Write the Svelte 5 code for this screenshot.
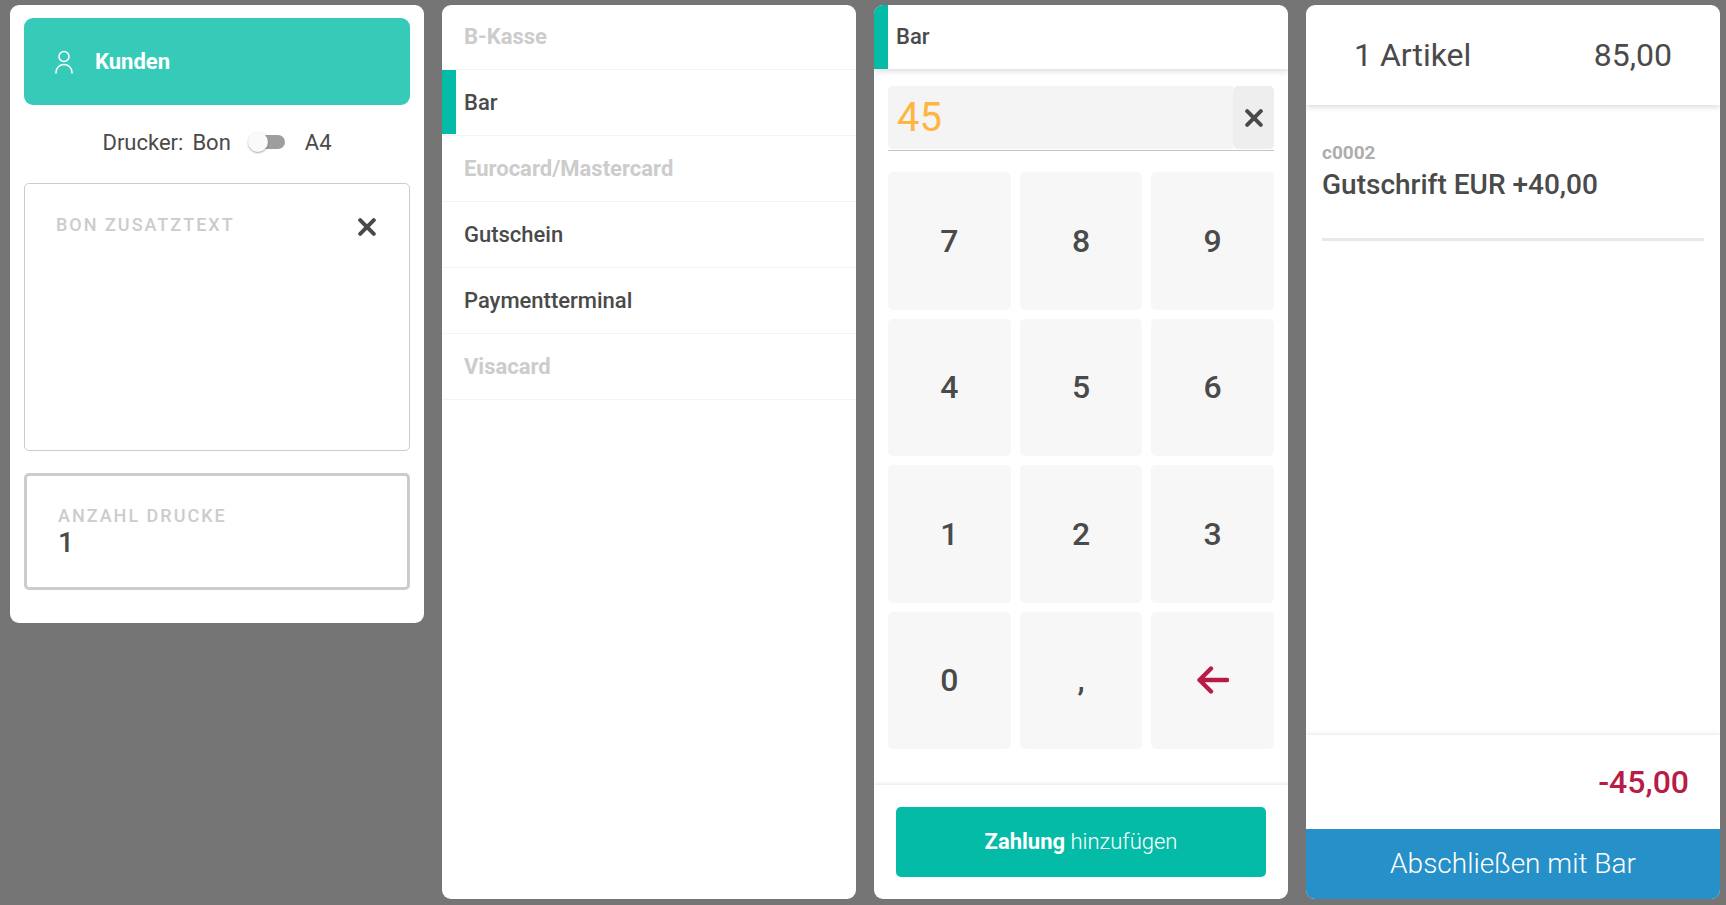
<script lang="ts">
  interface PaymentType {
    name: string
    enabled: boolean
  }

  const paymentTypes: PaymentType[] = [
    { name: 'B-Kasse', enabled: false },
    { name: 'Bar', enabled: true },
    { name: 'Eurocard/Mastercard', enabled: false },
    { name: 'Gutschein', enabled: true },
    { name: 'Paymentterminal', enabled: true },
    { name: 'Visacard', enabled: false }
  ]
  const keys = ['7', '8', '9', '4', '5', '6', '1', '2', '3', '0', ',']
  const items = [{ sku: 'c0002', name: 'Gutschrift EUR +40,00' }]

  let selected = $state('Bar')
  let amount = $state('45')
  let note = $state('')
  let copies = $state('1')
  let a4 = $state(false)

  function press(key: string) {
    if (key === ',' && amount.includes(',')) return
    amount += key
  }
</script>

{#snippet cross()}
  <svg class="cross" viewBox="0 0 18 18" aria-hidden="true">
    <path d="M2.2 2.2 15.8 15.8M15.8 2.2 2.2 15.8" />
  </svg>
{/snippet}

<main class="checkout">
  <section class="card options">
    <button class="customers">
      <svg viewBox="0 0 18 24" aria-hidden="true">
        <circle cx="9" cy="6.5" r="5" />
        <path d="M1 23.5v-1.3a8 7.7 0 0 1 16 0v1.3" />
      </svg>
      Kunden
    </button>

    <div class="printer">
      <span>Drucker:</span>
      <label class="switch">
        <span>Bon</span>
        <input type="checkbox" role="switch" bind:checked={a4} />
        <span>A4</span>
      </label>
    </div>

    <div class="note">
      <div class="note-head">
        <label class="caption" for="note">Bon Zusatztext</label>
        <button class="clear" aria-label="Text löschen" onclick={() => (note = '')}>
          {@render cross()}
        </button>
      </div>
      <textarea id="note" bind:value={note}></textarea>
    </div>

    <div class="copies">
      <label class="caption" for="copies">Anzahl Drucke</label>
      <input id="copies" type="text" inputmode="numeric" bind:value={copies} />
    </div>
  </section>

  <section class="card">
    <ul class="types">
      {#each paymentTypes as type (type.name)}
        <li>
          <button
            class="type"
            class:active={type.name === selected}
            disabled={!type.enabled}
            onclick={() => (selected = type.name)}
          >
            {type.name}
          </button>
        </li>
      {/each}
    </ul>
  </section>

  <section class="card payment">
    <h2 class="type active">{selected}</h2>

    <div class="entry">
      <div class="amount">
        <input type="text" inputmode="decimal" aria-label="Betrag" bind:value={amount} />
        <button class="clear" aria-label="Betrag löschen" onclick={() => (amount = '')}>
          {@render cross()}
        </button>
      </div>

      <div class="keypad">
        {#each keys as key (key)}
          <button onclick={() => press(key)}>{key}</button>
        {/each}
        <button aria-label="Zurück" onclick={() => (amount = amount.slice(0, -1))}>
          <svg class="back" viewBox="0 0 32 28" aria-hidden="true">
            <path d="M30 14H3M14 2.5 2.5 14 14 25.5" />
          </svg>
        </button>
      </div>
    </div>

    <footer class="add">
      <button><b>Zahlung</b> hinzufügen</button>
    </footer>
  </section>

  <section class="card receipt">
    <header class="summary">
      <span>{items.length} Artikel</span>
      <span>85,00</span>
    </header>

    <ul class="items">
      {#each items as item (item.sku)}
        <li>
          <span class="sku">{item.sku}</span>
          <span class="name">{item.name}</span>
        </li>
      {/each}
    </ul>

    <div class="due">-45,00</div>
    <button class="finish">Abschließen mit {selected}</button>
  </section>
</main>

<style>
  :global(body) {
    margin: 0;
    background: #757575;
  }

  .checkout {
    --text: #4a4a4a;
    --muted: #ccc;
    --teal: #04bba8;
    --red: #b71c47;

    box-sizing: border-box;
    min-height: 100vh;
    padding: 5px 6px 6px 10px;
    display: grid;
    grid-template-columns: repeat(4, minmax(0, 1fr));
    gap: 18px;
    font-family: Roboto, 'Liberation Sans', sans-serif;
    font-size: 22px;
    font-weight: 500;
    color: var(--text);
  }

  button,
  input,
  textarea {
    box-sizing: border-box;
    margin: 0;
    padding: 0;
    border: 0;
    border-radius: 0;
    background: none;
    font: inherit;
    color: inherit;
  }

  button {
    cursor: pointer;
  }

  ul {
    margin: 0;
    padding: 0;
    list-style: none;
  }

  .card {
    display: flex;
    flex-direction: column;
    background: #fff;
    border-radius: 9px;
    overflow: hidden;
  }

  .cross {
    display: block;
    width: 18px;
    height: 18px;
    fill: none;
    stroke: currentColor;
    stroke-width: 4;
    stroke-linecap: round;
  }

  .options {
    align-self: start;
    padding: 13px 14px 33px;
  }

  .customers {
    display: flex;
    align-items: center;
    gap: 22px;
    height: 87px;
    padding: 0 31px;
    border-radius: 9px;
    background: #36cbb9;
    color: #fff;
    font-weight: 700;
  }

  .customers svg {
    width: 18px;
    height: 24px;
    fill: none;
    stroke: currentColor;
    stroke-width: 1.5;
  }

  .printer {
    display: flex;
    justify-content: center;
    align-items: center;
    gap: 9px;
    height: 74px;
    padding-bottom: 4px;
    font-weight: 400;
  }

  .switch {
    display: flex;
    align-items: center;
    cursor: pointer;
  }

  .switch input {
    appearance: none;
    position: relative;
    width: 36px;
    height: 14px;
    margin: 0 20px 0 18px;
    border-radius: 7px;
    background: #9e9e9e;
    cursor: pointer;
  }

  .switch input::before {
    content: '';
    position: absolute;
    top: -3px;
    left: -1px;
    width: 20px;
    height: 20px;
    border-radius: 50%;
    background: #fafafa;
    box-shadow: 0 1px 2px rgba(0, 0, 0, 0.35);
  }

  .switch input:checked::before {
    left: 17px;
  }

  .caption {
    font-size: 18px;
    line-height: 22px;
    letter-spacing: 2px;
    text-transform: uppercase;
    color: var(--muted);
  }

  .note {
    display: flex;
    flex-direction: column;
    height: 268px;
    box-sizing: border-box;
    padding: 30px 33px 20px 31px;
    border: 1px solid var(--muted);
    border-radius: 5px;
  }

  .note-head {
    display: flex;
    justify-content: space-between;
  }

  .note-head .clear {
    padding-top: 4px;
  }

  .note textarea {
    flex: 1;
    resize: none;
    outline: none;
  }

  .copies {
    display: flex;
    flex-direction: column;
    margin-top: 22px;
    padding: 29px 31px 28px;
    border: 3px solid var(--muted);
    border-radius: 5px;
  }

  .copies input {
    height: 32px;
    font-size: 28px;
    line-height: 32px;
    outline: none;
  }

  .type {
    display: block;
    box-sizing: border-box;
    width: 100%;
    height: 64px;
    margin: 0;
    padding: 0 8px 0 22px;
    font-size: 22px;
    font-weight: 500;
    line-height: 64px;
    text-align: left;
  }

  .type.active {
    padding-left: 8px;
    border-left: 14px solid var(--teal);
  }

  .type:disabled {
    color: var(--muted);
    font-weight: 700;
    cursor: default;
  }

  .types li + li {
    padding-bottom: 1px;
    border-top: 1px solid #f4f4f4;
  }

  .types li + li .type {
    padding-top: 2px;
    line-height: 62px;
  }

  .types li:last-child {
    border-bottom: 1px solid #f4f4f4;
  }

  .payment h2 {
    box-shadow: 0 2px 6px rgba(0, 0, 0, 0.15);
  }

  .entry {
    flex: 1;
    display: flex;
    flex-direction: column;
    gap: 21px;
    padding: 17px 14px 36px;
  }

  .amount {
    display: flex;
    height: 63px;
    padding-bottom: 1px;
    border-bottom: 1px solid #c4c4c4;
  }

  .amount input {
    flex: 1;
    min-width: 0;
    padding: 0 9px;
    border-radius: 5px 0 0 5px;
    background: #f4f4f4;
    color: #ffb640;
    font-size: 40px;
    font-weight: 400;
    outline: none;
  }

  .amount .clear {
    display: grid;
    place-items: center;
    width: 41px;
    border-radius: 5px;
    background: #eee;
  }

  .keypad {
    flex: 1;
    display: grid;
    grid-template-columns: repeat(3, 1fr);
    grid-auto-rows: 1fr;
    gap: 9px;
  }

  .keypad button {
    display: grid;
    place-items: center;
    min-height: 64px;
    border-radius: 5px;
    background: #f7f7f7;
    font-size: 32px;
  }

  .back {
    width: 32px;
    height: 28px;
    fill: none;
    stroke: var(--red);
    stroke-width: 4.4;
    stroke-linecap: round;
    stroke-linejoin: round;
  }

  .add {
    padding: 22px;
    box-shadow: 0 -1px 4px rgba(0, 0, 0, 0.1);
  }

  .add button {
    width: 100%;
    height: 70px;
    padding-bottom: 2px;
    border-radius: 5px;
    background: var(--teal);
    color: #fff;
    font-weight: 300;
  }

  .add b {
    font-weight: 700;
  }

  .summary {
    display: flex;
    justify-content: space-between;
    height: 100px;
    padding: 0 48px;
    box-shadow: 0 2px 6px rgba(0, 0, 0, 0.15);
    font-size: 32px;
    font-weight: 400;
    line-height: 100px;
  }

  .items {
    flex: 1;
    padding: 36px 16px;
  }

  .items li {
    display: flex;
    flex-direction: column;
    padding-bottom: 33px;
    border-bottom: 3px solid #e8e8e8;
  }

  .sku {
    font-size: 19px;
    font-weight: 700;
    line-height: 24px;
    color: #adadad;
  }

  .name {
    font-size: 28px;
    line-height: 40px;
  }

  .due {
    padding: 0 31px;
    box-shadow: 0 -1px 4px rgba(0, 0, 0, 0.1);
    color: var(--red);
    font-size: 32px;
    line-height: 94px;
    text-align: right;
  }

  .finish {
    height: 70px;
    padding-bottom: 2px;
    background: #2690c8;
    color: #fff;
    font-size: 28px;
    font-weight: 300;
  }
</style>
